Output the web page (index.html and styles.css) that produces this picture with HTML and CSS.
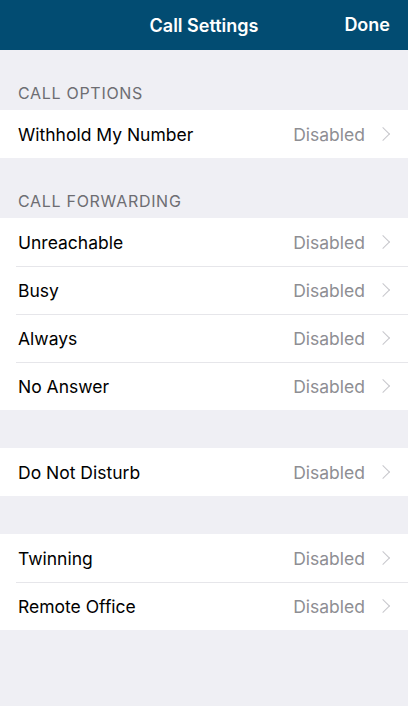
FILE: index.html
```html
<!DOCTYPE html>
<html lang="en">
<head>
    <meta charset="UTF-8">
    <link rel="stylesheet" href="styles.css">
</head>
<body>

<div class="navbar">
    <div class="nav-title">Call Settings</div>
    <div class="nav-done">Done</div>
</div>

<div class="section-header">CALL OPTIONS</div>
<div class="group">
    <div class="row"><span class="label">Withhold My Number</span><span class="value">Disabled</span><span class="chevron"></span></div>
</div>

<div class="section-header">CALL FORWARDING</div>
<div class="group">
    <div class="row"><span class="label">Unreachable</span><span class="value">Disabled</span><span class="chevron"></span></div>
    <div class="row"><span class="label">Busy</span><span class="value">Disabled</span><span class="chevron"></span></div>
    <div class="row"><span class="label">Always</span><span class="value">Disabled</span><span class="chevron"></span></div>
    <div class="row"><span class="label">No Answer</span><span class="value">Disabled</span><span class="chevron"></span></div>
</div>

<div class="spacer"></div>
<div class="group">
    <div class="row"><span class="label">Do Not Disturb</span><span class="value">Disabled</span><span class="chevron"></span></div>
</div>

<div class="spacer"></div>
<div class="group">
    <div class="row"><span class="label">Twinning</span><span class="value">Disabled</span><span class="chevron"></span></div>
    <div class="row"><span class="label">Remote Office</span><span class="value">Disabled</span><span class="chevron"></span></div>
</div>

</body>
</html>
```

FILE: styles.css
```css
body {
    margin: 0;
    font-family: Inter, "Noto Sans", sans-serif;
    background: #efeff4;
    height: 706px;
}
.navbar {
    height: 50px;
    background: #024c72;
    color: white;
    display: flex;
    align-items: center;
    justify-content: center;
    position: relative;
    font-size: 18px;
    font-weight: 600;
}
.nav-done {
    position: absolute;
    right: 18px;
    top: 0;
    line-height: 50px;
}
.section-header {
    padding: 34px 18px 8px;
    font-size: 16px;
    letter-spacing: 0.7px;
    color: #6d6d72;
    line-height: 18px;
}
.group {
    background: white;
}
.row {
    height: 48px;
    display: flex;
    align-items: center;
    padding: 0 18px;
    font-size: 17.5px;
    color: #000;
    position: relative;
}
.row + .row::before {
    content: "";
    position: absolute;
    top: 0;
    left: 16px;
    right: 0;
    border-top: 1px solid #e6e6ea;
}
.label {
    flex: 1;
}
.value {
    color: #8e8e93;
}
.chevron {
    width: 9px;
    height: 9px;
    border-top: 1.5px solid #c7c7cc;
    border-right: 1.5px solid #c7c7cc;
    transform: rotate(45deg);
    margin-left: 13px;
    margin-right: 2px;
}
.spacer {
    height: 38px;
}
```
